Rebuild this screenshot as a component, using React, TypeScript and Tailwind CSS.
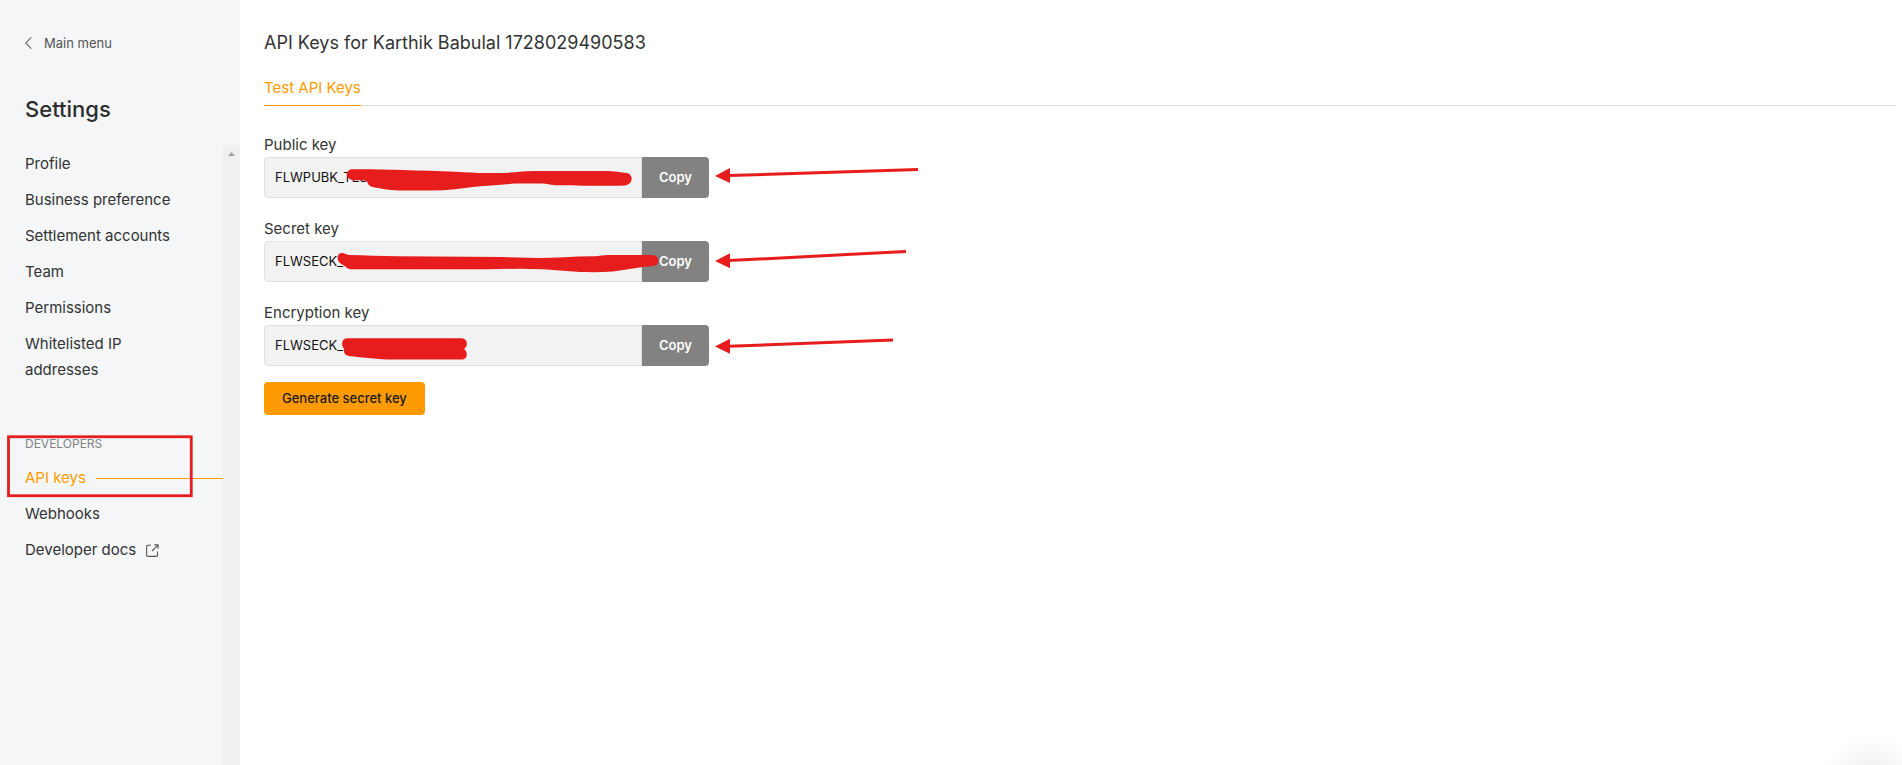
import { useState } from "react";

const settingsLinks = [
  "Profile",
  "Business preference",
  "Settlement accounts",
  "Team",
  "Permissions",
  "Whitelisted IP addresses",
];

const apiKeys = [
  { id: "public-key", label: "Public key", value: "FLWPUBK_TEST" },
  { id: "secret-key", label: "Secret key", value: "FLWSECK_" },
  { id: "encryption-key", label: "Encryption key", value: "FLWSECK_" },
];

function BackIcon() {
  return (
    <svg width="7" height="12" viewBox="0 0 7 12" fill="none" stroke="#666" strokeWidth="1.1">
      <path d="M6.3 0.4 L0.7 6 L6.3 11.6" />
    </svg>
  );
}

function ExternalIcon() {
  return (
    <svg width="13" height="13" viewBox="0 0 13 13" fill="none" stroke="#555" strokeWidth="1.1">
      <path d="M5 1.3H1.8Q0.6 1.3 0.6 2.5V11.2Q0.6 12.4 1.8 12.4H10.3Q11.5 12.4 11.5 11.2V7.6" />
      <path d="M6 7L11.6 1.4M8.3 0.9H12.1V4.7" />
    </svg>
  );
}

function Sidebar() {
  return (
    <aside className="flex w-60 shrink-0 flex-col bg-[#f4f6f8] text-[#333]">
      <a href="#menu" className="mt-8 flex items-center gap-3 pl-[25px] text-[13px] leading-[22px] text-[#555]">
        <BackIcon /> Main menu
      </a>
      <h2 className="mt-[37px] pl-[25px] text-[22px] font-medium leading-9 text-[#2d2d2d]">Settings</h2>

      <div className="mt-[18px] flex flex-1">
        <nav className="flex-1 pl-[25px] pt-[6px] text-[15px] leading-[26px]">
          <ul className="flex flex-col gap-[10px]">
            {settingsLinks.map((name) => (
              <li key={name} className="max-w-40">
                <a href="#settings">{name}</a>
              </li>
            ))}
          </ul>

          <h3 className="mt-[51px] text-[12px] leading-5 text-[#828282]">DEVELOPERS</h3>
          <ul className="mt-[11px] flex flex-col gap-[10px]">
            <li className="flex items-center gap-[10px] text-[#ff9b00]">
              <a href="#api-keys">API keys</a>
              <span className="h-px flex-1 bg-[#ff9b00]" />
            </li>
            <li><a href="#webhooks">Webhooks</a></li>
            <li>
              <a href="#docs" className="flex items-center gap-[10px]">Developer docs <ExternalIcon /></a>
            </li>
          </ul>
        </nav>

        {/* Scroll track */}
        <div className="w-[17px] bg-[#f0f0f0] pt-[7px]">
          <svg width="7" height="4" viewBox="0 0 7 4" className="mx-auto" fill="#a0a0a0">
            <path d="M3.5 0L7 4H0Z" />
          </svg>
        </div>
      </div>
    </aside>
  );
}

function KeyField({ id, label, value }: { id: string; label: string; value: string }) {
  const [copied, setCopied] = useState(false);

  const handleCopy = async () => {
    try {
      await navigator.clipboard.writeText(value);
      setCopied(true);
    } catch (err) { console.error(err); }
  };

  return (
    <div>
      <label htmlFor={id} className="block text-[15px] leading-[25px] text-[#333]">{label}</label>
      <div className="flex h-[41px] max-w-[445px]">
        <input
          id={id}
          readOnly
          value={value}
          className="min-w-0 flex-1 rounded-l border border-[#e0e0e0] bg-[#f2f2f2] px-[10px] text-[13px] text-[#111] outline-none"
        />
        <button onClick={handleCopy} title={copied ? "Copied" : undefined} className="w-[67px] rounded-r bg-[#828282] text-[13px] font-semibold text-white">
          Copy
        </button>
      </div>
    </div>
  );
}

// Red marker drawn over the keys, with arrows to the copy buttons
function Markup() {
  return (
    <svg aria-hidden="true" width="930" height="510" viewBox="0 0 930 510" className="pointer-events-none absolute left-0 top-0" fill="#e71d1d">
      <rect x="8.5" y="436.75" width="182.75" height="59" fill="none" stroke="#e71d1d" strokeWidth="2.8" />

      <path d="M351 169.3C370 169.3 385 169.5 402 170C420 170.5 438 171 455 171.7C470 172.3 475 173 485 173C495 173 503 173 512 172.6C520 172 525 171 533 171H605C614 171 620 172.3 627 173C633.5 174.5 633.5 184 625 185.4C610 186 575 185.6 555 185.2C550 184.8 547 183.6 542 183.5H515C500 185 487 185.5 475 186.7C462 188.5 448 190.5 432 190.6H400C392 190 385 189.5 378 188C372 187.2 369 186 368 183.5C367 181 366 180.5 362 180.2H353C346 179.5 345 170.5 351 169.3Z" />
      <path d="M342 253C345 253 346 254.8 349 255C365 255.3 380 256 398 256.3L502 257L538 258C556 258 575 256 595 256.2C602 255.6 606 255 613 255H652C660 255 660 265 655 265.6C651 266.8 647 266.4 643 267L613 271.5C602 272.4 590 272.2 580 272L560 270.6C554 270.3 548 269.2 542 269.2L520 268.7L488 269.2H350C346 268.6 345.5 265.4 342 264.5C335.5 261.5 336.5 252.8 342 253Z" />
      <path d="M347 338.3H462C467.5 338.5 468.6 346.5 464 349C468.5 352 467.5 359.4 462 359.6H388C380 359.3 373 358.4 365 357.7C358 356.8 352 356.6 349 356C344 354.8 343.5 352 344.3 349C341 346.5 341 338.5 347 338.3Z" />

      <path d="M715 176L730 168V183Z" />
      <path d="M715 261L730 253.3V268.3Z" />
      <path d="M715 346.5L730 338.8V353.8Z" />
      <g stroke="#e71d1d" strokeWidth="3">
        <path d="M729 175.6L918 169.5" />
        <path d="M729 260.6L906 251.4" />
        <path d="M729 346.3L893 340" />
      </g>
    </svg>
  );
}

export default function App() {
  return (
    <div className="relative flex min-h-screen overflow-hidden bg-white font-[Inter,'Liberation_Sans',sans-serif]">
      <Sidebar />

      <main className="min-w-0 flex-1 pb-10 pl-6 pr-[6px] pt-[29px] text-[#333]">
        <h1 className="text-[18px] leading-7">API Keys for Karthik Babulal 1728029490583</h1>

        <div role="tablist" className="mt-[18px] flex border-b border-[#e0e0e0]">
          <button role="tab" aria-selected="true" className="-mb-px border-b border-[#ff9b00] pb-1 text-[15px] leading-[26px] text-[#ff9b00]">
            Test API Keys
          </button>
        </div>

        <div className="mt-[26px] flex flex-col gap-[18px]">
          {apiKeys.map((key) => (
            <KeyField key={key.id} {...key} />
          ))}
        </div>

        <button className="mt-4 h-[33px] rounded bg-[#ff9b00] px-[18px] text-[13px] font-medium text-[#1a1a1a]">
          Generate secret key
        </button>
      </main>

      <Markup />
      <div className="pointer-events-none absolute bottom-0 right-0 h-10 w-[100px] bg-[radial-gradient(circle_at_70%_150%,#00000014,transparent_52px)]" />
    </div>
  );
}
